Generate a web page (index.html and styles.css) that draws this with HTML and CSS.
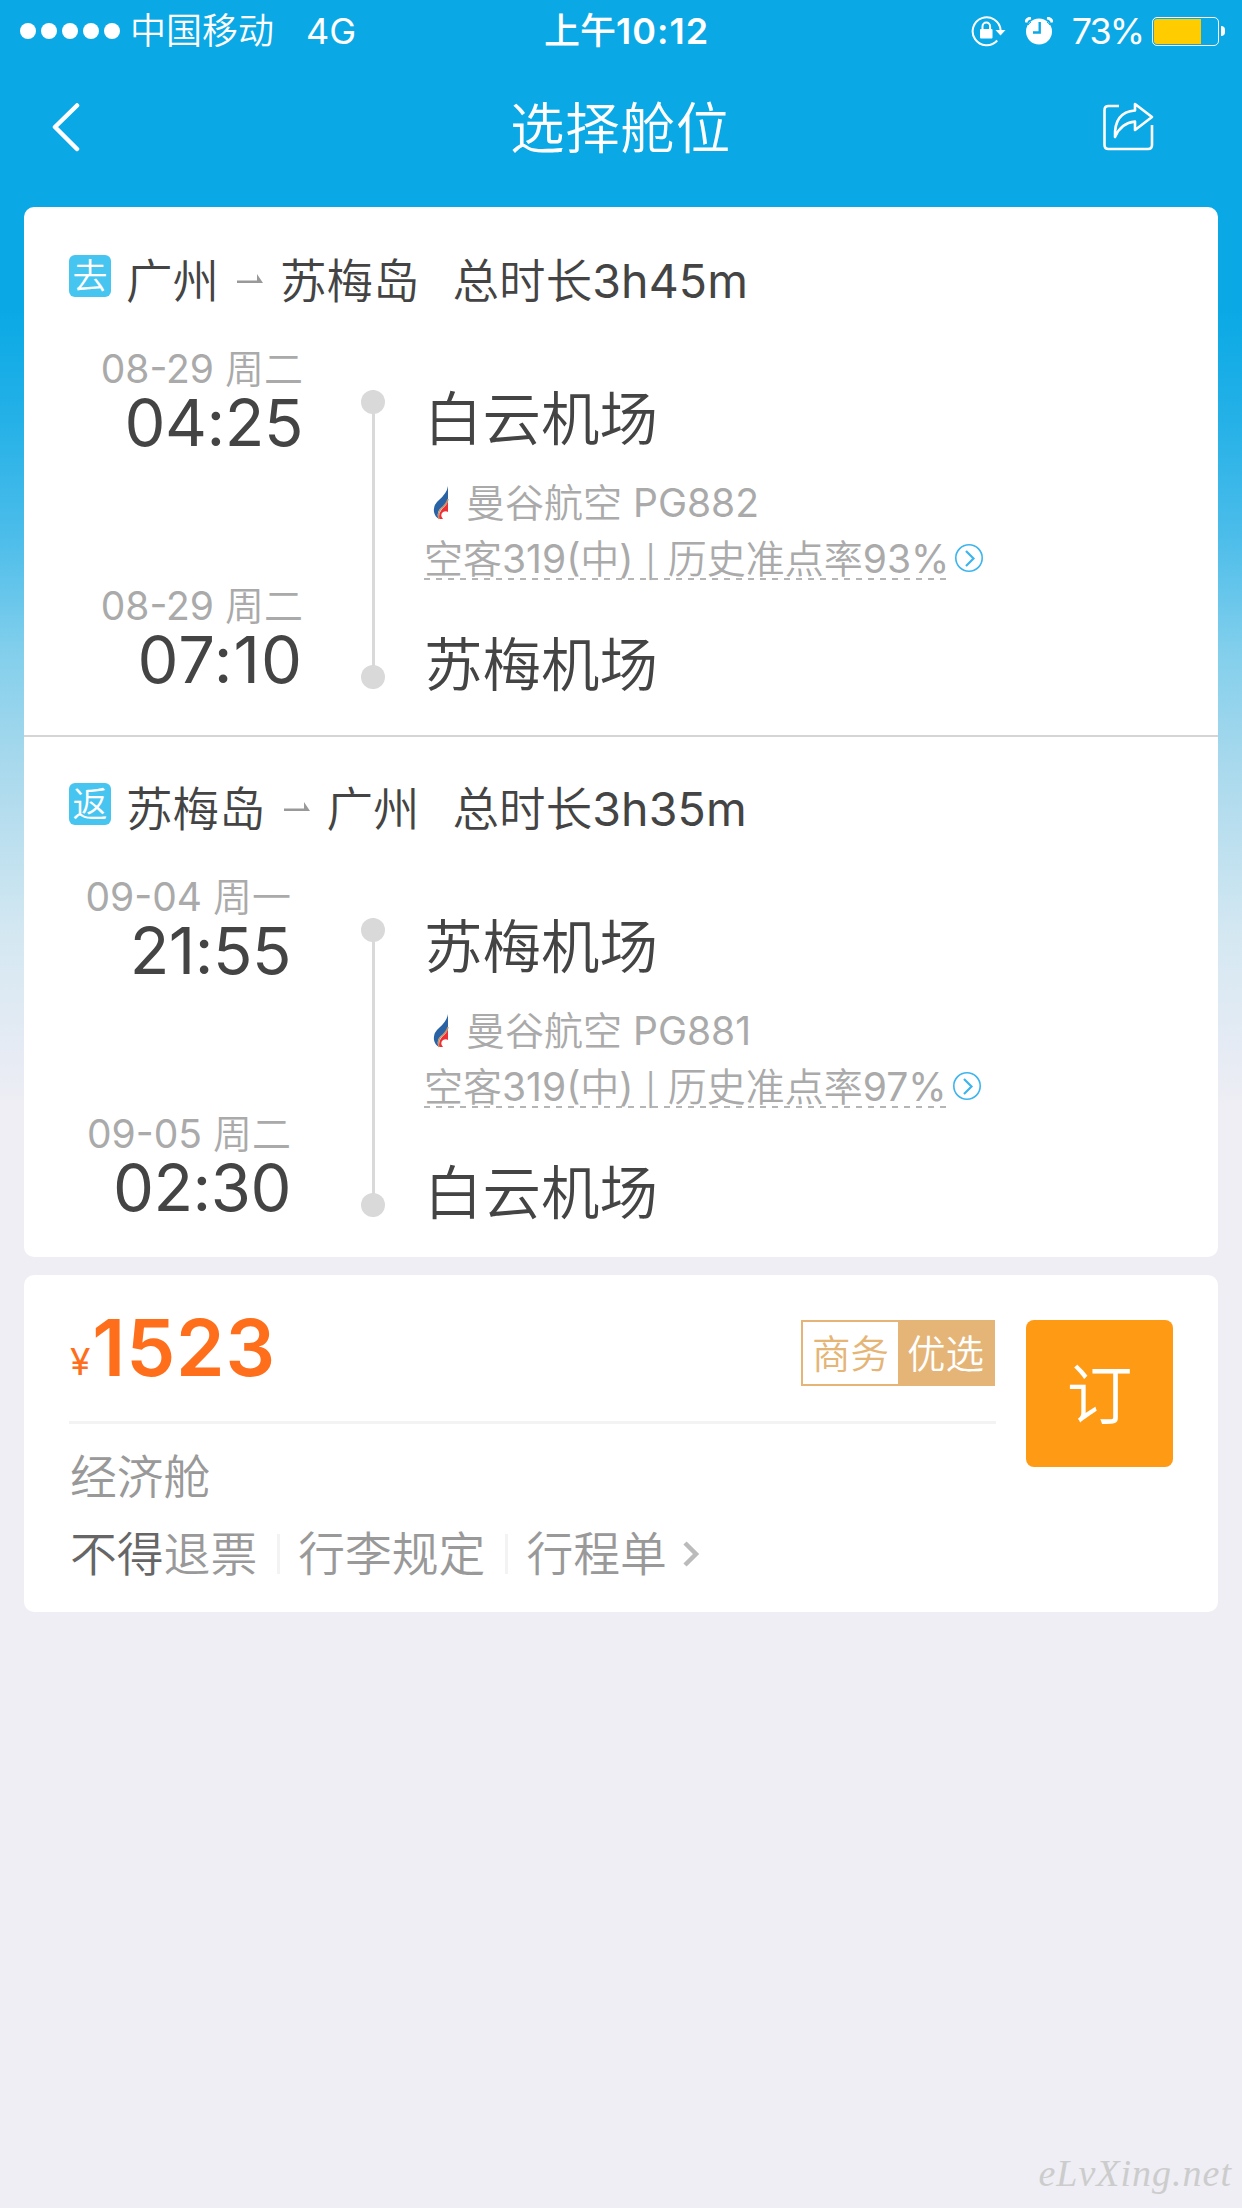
FILE: index.html
```html
<!DOCTYPE html>
<html lang="zh-CN">
<head>
    <meta charset="UTF-8">
    <title>选择舱位</title>
    <link rel="stylesheet" href="styles.css">
</head>
<body>
<div class="status">
    <div class="status-left">
        <div class="signal"><i></i><i></i><i></i><i></i><i></i></div>
        <span class="carrier">中国移动</span>
        <span class="network">4G</span>
    </div>
    <div class="clock">上午<b>10:12</b></div>
    <div class="status-right">
        <svg class="lock" width="36" height="32" viewBox="0 0 36 32">
            <path d="M26.200 25.500A14 14 0 1 1 29.600 15" fill="none" stroke="#fff" stroke-width="2"/>
            <path d="M24.500 15h10l-5 5.500z" fill="#fff"/>
            <rect x="9" y="14" width="12.500" height="9.500" rx="1" fill="#fff"/>
            <path d="M11.500 15v-3.500a3.800 4 0 0 1 7.600 0V15" fill="none" stroke="#fff" stroke-width="2"/>
        </svg>
        <svg class="alarm" width="28" height="28" viewBox="0 0 28 28">
            <circle cx="14" cy="14.500" r="13" fill="#fff"/>
            <path d="M.8 5.500Q1.500 1.500 6 1M27.200 5.500Q26.500 1.500 22 1" fill="none" stroke="#fff" stroke-width="3"/>
            <path d="M6 5A13 13 0 0 0 3 8M22 5A13 13 0 0 1 25 8" fill="none" stroke="#0aa9e6" stroke-width="1"/>
            <path d="M14.700 5v10.500H8" fill="none" stroke="#0aa9e6" stroke-width="2.400"/>
        </svg>
        <span class="percent">73%</span>
        <div class="battery"><div class="level"></div></div>
        <div class="battery-cap"></div>
    </div>
</div>

<div class="header">
    <svg class="back" width="30" height="50" viewBox="0 0 30 50">
        <path d="M27 3.500L5 25L27 47" fill="none" stroke="#fff" stroke-width="4.500" stroke-linecap="round" stroke-linejoin="round"/>
    </svg>
    <h1>选择舱位</h1>
    <svg class="share" width="52" height="50" viewBox="0 0 52 50">
        <path d="M17 4H6.500Q2.500 4 2.500 8V43Q2.500 47 6.500 47H46Q50 47 50 43V23" fill="none" stroke="#fff" stroke-width="2.600"/>
        <path d="M33 2L50 15L33 28V19.500Q19 21 13 35Q12 10 33 8.500Z" fill="none" stroke="#fff" stroke-width="2.600" stroke-linejoin="round"/>
    </svg>
</div>

<div class="card flights">
    <div class="leg">
        <div class="leg-title">
            <span class="tag">去</span>
            <span class="city">广州</span>
            <svg class="arrow" width="26" height="10" viewBox="0 0 26 10"><path d="M0 6.500H20V0L26 9H0Z" fill="#999"/></svg>
            <span class="city">苏梅岛</span>
            <span class="total">总时长3h45m</span>
        </div>
        <div class="leg-body">
            <div class="times">
                <div class="date">08-29 周二</div>
                <div class="time">04:25</div>
                <div class="date arrive">08-29 周二</div>
                <div class="time wide">07:10</div>
            </div>
            <div class="track"></div>
            <div class="info">
                <div class="airport">白云机场</div>
                <div class="airline">
                    <svg class="logo" width="16" height="34" viewBox="0 0 16 34">
                        <path d="M15 0Q14 7 6 14Q0 19 1 26Q2 31 6 33Q3 27 7 23Q14 18 15 13Z" fill="#2a62a6"/>
                        <path d="M15 13Q14 18 8 22.500Q4 27 6 33" fill="none" stroke="#b99a6b" stroke-width="1.500"/>
                        <path d="M15 15Q14 19 9 23Q5 28 6.500 33H10Q6.500 29 10 26Q13 24.500 15 26Z" fill="#f02f35"/>
                    </svg>
                    <span>曼谷航空 PG882</span>
                </div>
                <div class="plane">
                    <span class="dashed">空客319(中) <i>|</i> 历史准点率93%</span>
                    <svg class="more" width="28" height="28" viewBox="0 0 28 28">
                        <circle cx="14" cy="14" r="13.200" fill="none" stroke="#3cb5ee" stroke-width="1.600"/>
                        <path d="M11 7L18.500 14.500L11 22" fill="none" stroke="#3cb5ee" stroke-width="2.200"/>
                    </svg>
                </div>
                <div class="airport">苏梅机场</div>
            </div>
        </div>
    </div>
    <div class="leg return">
        <div class="leg-title">
            <span class="tag">返</span>
            <span class="city">苏梅岛</span>
            <svg class="arrow" width="26" height="10" viewBox="0 0 26 10"><path d="M0 6.500H20V0L26 9H0Z" fill="#999"/></svg>
            <span class="city">广州</span>
            <span class="total">总时长3h35m</span>
        </div>
        <div class="leg-body">
            <div class="times">
                <div class="date">09-04 周一</div>
                <div class="time">21:55</div>
                <div class="date arrive">09-05 周二</div>
                <div class="time">02:30</div>
            </div>
            <div class="track"></div>
            <div class="info">
                <div class="airport">苏梅机场</div>
                <div class="airline">
                    <svg class="logo" width="16" height="34" viewBox="0 0 16 34">
                        <path d="M15 0Q14 7 6 14Q0 19 1 26Q2 31 6 33Q3 27 7 23Q14 18 15 13Z" fill="#2a62a6"/>
                        <path d="M15 13Q14 18 8 22.500Q4 27 6 33" fill="none" stroke="#b99a6b" stroke-width="1.500"/>
                        <path d="M15 15Q14 19 9 23Q5 28 6.500 33H10Q6.500 29 10 26Q13 24.500 15 26Z" fill="#f02f35"/>
                    </svg>
                    <span>曼谷航空 PG881</span>
                </div>
                <div class="plane">
                    <span class="dashed">空客319(中) <i>|</i> 历史准点率97%</span>
                    <svg class="more" width="28" height="28" viewBox="0 0 28 28">
                        <circle cx="14" cy="14" r="13.200" fill="none" stroke="#3cb5ee" stroke-width="1.600"/>
                        <path d="M11 7L18.500 14.500L11 22" fill="none" stroke="#3cb5ee" stroke-width="2.200"/>
                    </svg>
                </div>
                <div class="airport">白云机场</div>
            </div>
        </div>
    </div>
</div>

<div class="card fare">
    <div class="fare-main">
        <div class="fare-top">
            <div class="price"><small>¥</small><b>1523</b></div>
            <div class="label"><span class="label-a">商务</span><span class="label-b">优选</span></div>
        </div>
        <div class="cabin">经济舱</div>
        <div class="rules">
            <span><em>不得</em>退票</span>
            <span>行李规定</span>
            <span>行程单</span>
            <svg width="18" height="28" viewBox="0 0 18 28"><path d="M3 3L14 14L3 25" fill="none" stroke="#bbb" stroke-width="4.500"/></svg>
        </div>
    </div>
    <button class="book">订</button>
</div>

<div class="watermark">eLvXing.net</div>
</body>
</html>
```
FILE: styles.css
```css
* {
    box-sizing: border-box;
}
body {
    margin: 0;
    height: 2208px;
    display: flex;
    flex-direction: column;
    font-family: Inter, "Noto Sans CJK SC DemiLight", "Noto Sans CJK SC", sans-serif;
    font-weight: 400;
    color: #444;
    white-space: nowrap;
    background: #efeef4 linear-gradient(#0aa9e6 0, #0aa9e6 310px, #25b1e7 422px, #4cbdea 537px, #82cfec 652px, #a9d9ed 767px, #d5e8f2 939px, #e6ebf4 1054px, #efeef4 1111px) no-repeat;
}
.status {
    display: grid;
    grid-template-columns: 1fr auto 1fr;
    height: 62px;
    line-height: 62px;
    padding: 0 17px 0 20px;
    font-size: 36px;
    color: #fff;
}
.status-left, .status-right {
    display: flex;
    align-items: center;
}
.status-right {
    justify-content: flex-end;
}
.signal {
    display: flex;
    gap: 5px;
}
.signal i {
    width: 16px;
    height: 16px;
    border-radius: 50%;
    background: #fff;
}
.carrier {
    margin-left: 10px;
}
.network {
    margin-left: 32px;
}
.clock {
    margin-left: 8px;
    font-family: Inter, "Noto Sans CJK SC", sans-serif;
    font-weight: 500;
}
.clock b {
    font-weight: 600;
    letter-spacing: 1px;
}
.lock {
    margin-right: 18px;
}
.alarm {
    margin-right: 19px;
}
.percent {
    margin-right: 9px;
    letter-spacing: -2px;
}
.battery {
    width: 67px;
    height: 29px;
    padding: 1px;
    border: 1px solid #fff;
    border-radius: 5px;
}
.level {
    width: 47px;
    height: 25px;
    border-radius: 3px 0 0 3px;
    background: #ffcc00;
}
.battery-cap {
    width: 4px;
    height: 10px;
    margin-left: 2px;
    border-radius: 0 4px 4px 0;
    background: #fff;
}
.header {
    display: flex;
    align-items: center;
    justify-content: space-between;
    height: 145px;
    padding: 0 88px 16px 50px;
    color: #fff;
}
h1 {
    margin: 2px 0 0 59px;
    font-size: 54.5px;
    font-weight: 400;
    letter-spacing: 0.8px;
    line-height: 60px;
}
.card {
    margin: 0 24px 18px;
    border-radius: 10px;
    background: #fff;
}
.flights {
    height: 1050px;
}
.leg {
    height: 530px;
    padding: 48px 45px 0;
    border-bottom: 2px solid #d5d5d5;
}
.leg.return {
    height: 520px;
    padding-top: 46px;
    border: 0;
}
.leg-title {
    display: flex;
    height: 50px;
    line-height: 52px;
    font-size: 46.5px;
}
.tag {
    width: 42px;
    height: 42px;
    margin-right: 15px;
    border-radius: 6px;
    background: #47c5f1;
    color: #fff;
    font-size: 35px;
    line-height: 42px;
    text-align: center;
}
.arrow {
    margin: 19px 17px 0 18px;
}
.total {
    margin-left: 33px;
    letter-spacing: 0.1px;
}
.leg-body {
    display: flex;
    margin-top: 40px;
}
.times {
    width: 234px;
    text-align: right;
}
.return .times {
    width: 222px;
}
.date {
    font-size: 39px;
    line-height: 48px;
    color: #aaa;
}
.arrive {
    margin-top: 129px;
}
.time {
    font-size: 65px;
    line-height: 60px;
    letter-spacing: -0.500px;
}
.wide {
    letter-spacing: 1px;
}
.track {
    display: flex;
    flex-direction: column;
    align-items: center;
    width: 24px;
    height: 299px;
    margin: 45px 39px 0 58px;
    background: linear-gradient(#d9d9d9, #d9d9d9) center / 3px 100% no-repeat;
    justify-content: space-between;
}
.return .track {
    margin-left: 70px;
}
.track::before, .track::after {
    content: "";
    width: 24px;
    height: 24px;
    border-radius: 50%;
    background: #d9d9d9;
}
.info {
    padding-top: 39px;
}
.airport {
    font-size: 58.5px;
    line-height: 70px;
}
.airline {
    display: flex;
    align-items: center;
    margin-top: 24px;
    padding-left: 9px;
    line-height: 50px;
    font-size: 39px;
    color: #aaa;
}
.logo {
    margin-right: 17px;
}
.plane {
    display: flex;
    margin: 10px 0 50px;
    font-size: 39px;
    line-height: 41px;
    color: #aaa;
}
.dashed {
    height: 42px;
    background: repeating-linear-gradient(90deg, #b5b5b5 0 6px, transparent 6px 12px) left bottom / 100% 2px no-repeat;
}
.dashed i {
    font-size: 31px;
    font-style: normal;
    line-height: 1;
    padding: 0 1px;
}
.more {
    margin: 6px 0 0 6px;
}
.fare {
    display: flex;
    justify-content: space-between;
    height: 337px;
    padding: 45px 45px 0;
}
.fare-main {
    width: 927px;
}
.fare-top {
    display: flex;
    justify-content: space-between;
    height: 104px;
    padding-right: 1px;
    border-bottom: 3px solid #f3f3f3;
}
.price {
    color: #ff6e1a;
    line-height: 56px;
}
.price small {
    margin: 0 2px 0 1px;
    font-size: 37px;
    line-height: 1;
    vertical-align: 1px;
}
.price b {
    font-size: 78px;
    font-weight: 580;
    letter-spacing: 0.8px;
}
.label {
    display: flex;
    width: 194px;
    height: 66px;
    border: 2px solid #e5b577;
    font-size: 38.5px;
    line-height: 64px;
    text-align: center;
}
.label span {
    flex: 1;
}
.label-a {
    color: #e5b577;
}
.label-b {
    background: #e5b577;
    color: #fff;
}
.cabin {
    margin-top: 23px;
    padding-left: 1px;
    font-size: 46.8px;
    line-height: 60px;
    color: #999;
}
.rules {
    display: flex;
    align-items: center;
    margin-top: 17px;
    padding-left: 1px;
    font-size: 46.8px;
    line-height: 60px;
    color: #999;
}
.rules span + span {
    margin-left: 20px;
    padding-left: 21px;
    background: linear-gradient(#f3f3f3, #f3f3f3) left center / 3px 40px no-repeat;
}
.rules em {
    font-style: normal;
    color: #666;
}
.rules svg {
    margin-left: 15px;
}
.book {
    width: 147px;
    height: 147px;
    padding: 0;
    border: 0;
    border-radius: 8px;
    background: #ff9a14;
    color: #fff;
    font-family: inherit;
    font-size: 66px;
    line-height: 151px;
}
.watermark {
    margin: auto 10px 14px auto;
    font-family: "Z003", "URW Chancery L", "Liberation Serif", cursive;
    font-style: italic;
    font-size: 38px;
    letter-spacing: 1px;
    line-height: 42px;
    color: #ccc;
}
```
